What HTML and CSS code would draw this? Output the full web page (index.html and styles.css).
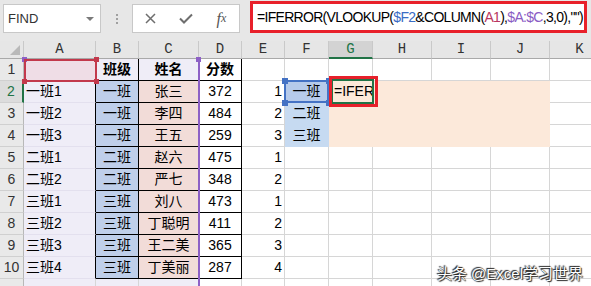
FILE: index.html
```html
<!DOCTYPE html>
<html>
<head>
	<meta charset="utf-8"/>
	<title>FIND - IFERROR</title>
	<link rel="stylesheet" href="styles.css">
</head>
<body>
<div class="bar">
	<div class="namebox"><span>FIND</span><span class="drop"></span></div>
	<div class="dots"><i></i><i></i><i></i></div>
	<div class="btns">
		<span><svg width="11" height="11"><path d="M1 1L10 10M10 1L1 10" stroke="#6e6e6e" stroke-width="1.5"/></svg></span>
		<span><svg width="14" height="11"><path d="M1 5.5L5 9.5L13 1.5" stroke="#6e6e6e" stroke-width="2" fill="none"/></svg></span>
		<span class="fx">f<small>x</small></span>
	</div>
	<div class="formula">=IFERROR(VLOOKUP(<span class="r1">$F2</span>&amp;COLUMN(<span class="r2">A1</span>),<span class="r3">$A:$C</span>,3,0),"")</div>
</div>

<div class="sheet">
	<div class="row hdr">
		<div class="corner"><i></i></div><div>A</div><div>B</div><div>C</div><div>D</div><div>E</div><div>F</div><div class="on">G</div><div>H</div><div>I</div><div>J</div><div>K</div>
	</div>
	<div class="row">
		<div class="rh">1</div><div class="name first kr"></div><div class="cls top k">班级</div><div class="who top k">姓名</div><div class="score k bold">分数</div><div></div><div></div><div></div><div></div><div></div><div></div><div></div>
	</div>
	<div class="row">
		<div class="rh on">2</div><div class="name kr">一班1</div><div class="cls k">一班</div><div class="who k">张三</div><div class="score k">372</div><div class="num">1</div><div class="pick sel">一班</div><div class="peach edit">=IFER</div><div class="peach"></div><div class="peach"></div><div class="peach"></div><div></div>
	</div>
	<div class="row">
		<div class="rh">3</div><div class="name kr">一班2</div><div class="cls k">一班</div><div class="who k">李四</div><div class="score k">484</div><div class="num">2</div><div class="pick">二班</div><div class="peach"></div><div class="peach"></div><div class="peach"></div><div class="peach"></div><div></div>
	</div>
	<div class="row">
		<div class="rh">4</div><div class="name kr">一班3</div><div class="cls k">一班</div><div class="who k">王五</div><div class="score k">259</div><div class="num">3</div><div class="pick">三班</div><div class="peach"></div><div class="peach"></div><div class="peach"></div><div class="peach"></div><div></div>
	</div>
	<div class="row">
		<div class="rh">5</div><div class="name kr">二班1</div><div class="cls k">二班</div><div class="who k">赵六</div><div class="score k">475</div><div class="num">1</div><div></div><div></div><div></div><div></div><div></div><div></div>
	</div>
	<div class="row">
		<div class="rh">6</div><div class="name kr">二班2</div><div class="cls k">二班</div><div class="who k">严七</div><div class="score k">348</div><div class="num">2</div><div></div><div></div><div></div><div></div><div></div><div></div>
	</div>
	<div class="row">
		<div class="rh">7</div><div class="name kr">三班1</div><div class="cls k">三班</div><div class="who k">刘八</div><div class="score k">473</div><div class="num">1</div><div></div><div></div><div></div><div></div><div></div><div></div>
	</div>
	<div class="row">
		<div class="rh">8</div><div class="name kr">三班2</div><div class="cls k">三班</div><div class="who k">丁聪明</div><div class="score k">411</div><div class="num">2</div><div></div><div></div><div></div><div></div><div></div><div></div>
	</div>
	<div class="row">
		<div class="rh">9</div><div class="name kr">三班3</div><div class="cls k">三班</div><div class="who k">王二美</div><div class="score k">365</div><div class="num">3</div><div></div><div></div><div></div><div></div><div></div><div></div>
	</div>
	<div class="row">
		<div class="rh">10</div><div class="name kr">三班4</div><div class="cls k">三班</div><div class="who k">丁美丽</div><div class="score k">287</div><div class="num">4</div><div></div><div></div><div></div><div></div><div></div><div></div>
	</div>
	<div class="row short">
		<div class="rh"></div><div class="name"></div><div class="cls top"></div><div class="who top"></div><div></div><div></div><div></div><div></div><div></div><div></div><div></div><div></div>
	</div>

	<!-- reference highlights drawn over the grid -->
	<div class="ref-ac"></div>
	<div class="hd purple" style="left:22px;top:16px"></div>
	<div class="hd purple" style="left:196px;top:16px"></div>
	<div class="ref-a1"></div>
	<div class="hd red" style="left:94px;top:16px"></div>
	<div class="hd red" style="left:94px;top:38px"></div>
	<div class="hd red" style="left:22px;top:38px"></div>
	<div class="ref-f2"></div>
	<div class="hd blue" style="left:282px;top:37px"></div>
	<div class="hd blue" style="left:326px;top:37px"></div>
	<div class="hd blue" style="left:282px;top:59px"></div>
	<div class="hd blue" style="left:326px;top:59px"></div>
	<div class="active"></div>
	<div class="mark"></div>
</div>

<div class="stamp">头条 @Excel学习世界</div>
</body>
</html>
```

FILE: styles.css
```css
body{
	margin: 0;
	width: 591px;
	height: 286px;
	overflow: hidden;
	position: relative;
	background: #fff;
	color: #000;
	font-family: "Liberation Sans", "Noto Sans CJK SC", sans-serif;
}

/* formula bar */
.bar{
	height: 41px;
	box-sizing: border-box;
	padding-top: 1px;
	background: #e7e7e7;
	display: flex;
	align-items: flex-start;
}
.namebox{
	margin: 3px 0 0 3px;
	width: 98px;
	height: 29px;
	box-sizing: border-box;
	background: #fff;
	border: 1px solid #c8c8c8;
	display: flex;
	align-items: center;
	justify-content: space-between;
	padding: 0 6px 0 4px;
	font-size: 13px;
	color: #333;
}
.drop{
	border-left: 4px solid transparent;
	border-right: 4px solid transparent;
	border-top: 4px solid #7a7a7a;
}
.dots{
	width: 31px;
	height: 29px;
	margin-top: 3px;
	display: flex;
	flex-direction: column;
	align-items: center;
	justify-content: center;
	gap: 2px;
}
.dots i{
	width: 2px;
	height: 2px;
	background: #a0a0a0;
}
.btns{
	margin-top: 3px;
	width: 108px;
	height: 29px;
	box-sizing: border-box;
	background: #fff;
	border: 1px solid #c8c8c8;
	display: flex;
	align-items: center;
}
.btns span{
	width: 36px;
	display: flex;
	justify-content: center;
	align-items: center;
}
.fx{
	font-family: "Liberation Serif", serif;
	font-style: italic;
	font-size: 16px;
	color: #555;
}
.fx small{
	font-size: 12px;
}
.formula{
	margin-left: 10px;
	width: 337px;
	height: 32px;
	box-sizing: border-box;
	border: 3px solid #e8202a;
	background: #fff;
	padding-left: 4px;
	font-size: 14px;
	letter-spacing: -0.7px;
	line-height: 26px;
	white-space: nowrap;
	overflow: hidden;
}
.r1{ color: #3a6cc4; }
.r2{ color: #b9375f; }
.r3{ color: #8a5cc4; }

/* grid */
.sheet{
	position: relative;
}
.row{
	display: grid;
	grid-template-columns: 24px 72px 43px 60px 43px 43px 44px 44px 59px 59px 59px 60px;
	height: 22px;
}
.row.short{
	height: 8px;
}
.row > div{
	box-sizing: border-box;
	border-right: 1px solid #d6d6d6;
	border-bottom: 1px solid #d6d6d6;
	font-size: 14px;
	line-height: 21px;
	white-space: nowrap;
	overflow: hidden;
}
.hdr{
	height: 18px;
}
.hdr > div{
	background: #e6e6e6;
	border-right-color: #c9c9c9 !important;
	border-bottom-color: #a9a9a9 !important;
	font-family: "Liberation Mono", monospace;
	font-size: 14px !important;
	line-height: 17px !important;
	text-align: center;
	color: #333;
}
.hdr > div.on{
	background: #d3d3d3;
	color: #217346;
	border-bottom: 2px solid #217346 !important;
}
.corner{
	position: relative;
}
.corner i{
	position: absolute;
	right: 3px;
	bottom: 3px;
	border-left: 10px solid transparent;
	border-bottom: 10px solid #b9b9b9;
}
.rh{
	background: #e9e9e9;
	border-right-color: #b8b8b8 !important;
	border-bottom-color: #d0d0d0 !important;
	text-align: center;
	color: #333;
}
.rh.on{
	background: #dcdcdc;
	color: #217346;
	border-right: 2px solid #217346 !important;
}

.name{
	background: #efedf7;
	border-bottom-color: #e3e0ee !important;
	padding-left: 2px;
}
.name.first{
	background: #efdde6;
}
.kr{
	border-right-color: #000 !important;
}
.k{
	border-right-color: #000 !important;
	border-bottom-color: #000 !important;
}
.cls, .who, .score, .pick{
	text-align: center;
}
.cls{
	background: #bfcfea;
}
.who{
	background: #f2dcd8;
}
.cls.top, .who.top{
	background: #efedf7;
	font-weight: bold;
}
.bold{
	font-weight: bold;
}
.num{
	text-align: right;
	padding-right: 2px;
}
.pick{
	background: #c6daf1;
	border-color: #c6daf1 !important;
}
.pick.sel{
	background: #b6caea;
}
.peach{
	background: #fce9da;
	border-color: #fce9da !important;
}
.edit{
	padding-left: 5px;
}

/* reference outlines */
.ref-ac{
	position: absolute;
	left: 198px;
	top: 18px;
	width: 2px;
	height: 227px;
	background: #8d60c6;
}
.ref-a1{
	position: absolute;
	left: 24px;
	top: 18px;
	width: 73px;
	height: 23px;
	box-sizing: border-box;
	border: 2px solid #c2394c;
}
.ref-f2{
	position: absolute;
	left: 284px;
	top: 39px;
	width: 45px;
	height: 23px;
	box-sizing: border-box;
	border: 2px solid #4472c4;
}
.hd{
	position: absolute;
	width: 5px;
	height: 5px;
}
.hd.purple{ background: #8d60c6; }
.hd.red{ background: #c2394c; }
.hd.blue{ background: #4472c4; width: 6px; height: 6px; }
.active{
	position: absolute;
	left: 331px;
	top: 38px;
	width: 43px;
	height: 25px;
	box-sizing: border-box;
	border: 2px solid #217346;
}
.mark{
	position: absolute;
	left: 329px;
	top: 35px;
	width: 49px;
	height: 31px;
	box-sizing: border-box;
	border: 3px solid #e6212b;
}

.stamp{
	position: absolute;
	right: 8px;
	top: 262px;
	font-size: 15px;
	color: #fff;
	text-shadow: 0 0 1px #222, 1px 1px 1px #222, -1px -1px 1px #222;
	white-space: nowrap;
}
```
